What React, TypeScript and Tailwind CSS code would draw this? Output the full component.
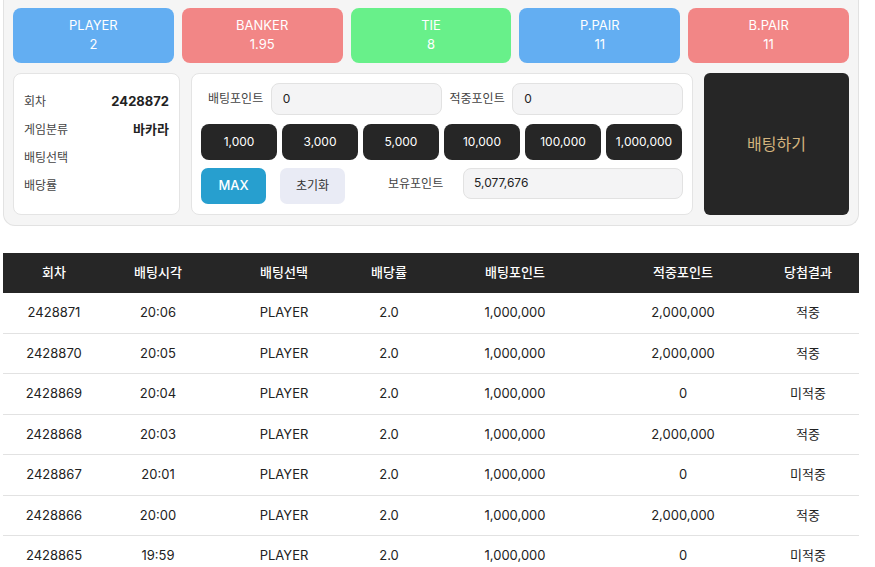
import React from 'react';

const font = { fontFamily: 'Inter, "Noto Sans CJK KR", sans-serif' };

const bets = [
  { name: 'PLAYER', rate: '2', color: 'bg-[#63aef2]' },
  { name: 'BANKER', rate: '1.95', color: 'bg-[#f28686]' },
  { name: 'TIE', rate: '8', color: 'bg-[#68f08a]' },
  { name: 'P.PAIR', rate: '11', color: 'bg-[#63aef2]' },
  { name: 'B.PAIR', rate: '11', color: 'bg-[#f28686]' },
];

const chips = ['1,000', '3,000', '5,000', '10,000', '100,000', '1,000,000'];

const history = [
  ['2428871', '20:06', '2,000,000', '적중'],
  ['2428870', '20:05', '2,000,000', '적중'],
  ['2428869', '20:04', '0', '미적중'],
  ['2428868', '20:03', '2,000,000', '적중'],
  ['2428867', '20:01', '0', '미적중'],
  ['2428866', '20:00', '2,000,000', '적중'],
  ['2428865', '19:59', '0', '미적중'],
];

const cols = 'grid grid-cols-[102px_106px_146px_64px_188px_148px_102px]';

export default function App() {
  return (
    <div className="w-[875px] h-[567px] overflow-hidden bg-white text-[#222]" style={font}>
      {/* bet panel */}
      <div className="ml-[3px] w-[856px] bg-[#f5f5f5] border border-t-0 border-[#e2e2e2] rounded-b-[12px] px-[9px] pt-[8px] pb-[10px]">
        <div className="flex gap-[8px]">
          {bets.map((b) => (
            <div
              key={b.name}
              className={`${b.color} flex-1 h-[55px] rounded-[8px] flex flex-col items-center justify-center pb-[2px] text-white text-[13px] leading-[19px]`}
            >
              <span>{b.name}</span>
              <span>{b.rate}</span>
            </div>
          ))}
        </div>

        <div className="flex mt-[10px] h-[142px]">
          <div className="w-[167px] bg-white border border-[#e4e4e4] rounded-[8px] px-[10px] pt-[14px] text-[12px] text-[#444]">
            <div className="flex justify-between items-center h-[28px]">
              <span>회차</span>
              <span className="font-bold text-[13px] text-[#222]">2428872</span>
            </div>
            <div className="flex justify-between items-center h-[28px]">
              <span>게임분류</span>
              <span className="font-bold text-[13px] text-[#222]">바카라</span>
            </div>
            <div className="flex items-center h-[28px]">배팅선택</div>
            <div className="flex items-center h-[28px]">배당률</div>
          </div>

          <div className="ml-[11px] w-[502px] bg-white border border-[#e4e4e4] rounded-[8px] px-[9px] pt-[9px]">
            <div className="flex items-center h-[32px] text-[12px] text-[#444]">
              <span className="ml-[7px] w-[63px]">배팅포인트</span>
              <div className="w-[171px] h-[32px] rounded-[8px] bg-[#f4f4f5] border border-[#e2e2e2] flex items-center px-[11px] text-[12px] text-[#222]">0</div>
              <span className="ml-[8px] w-[63px]">적중포인트</span>
              <div className="w-[171px] h-[32px] rounded-[8px] bg-[#f4f4f5] border border-[#e2e2e2] flex items-center px-[11px] text-[12px] text-[#222]">0</div>
            </div>

            <div className="flex gap-[5px] mt-[9px]">
              {chips.map((c) => (
                <button
                  key={c}
                  className="w-[76px] h-[36px] rounded-[8px] bg-[#262626] text-white text-[12px] flex items-center justify-center"
                >
                  {c}
                </button>
              ))}
            </div>

            <div className="flex items-center mt-[8px]">
              <button className="w-[65px] h-[36px] rounded-[7px] bg-[#279fcf] text-white text-[13px] font-medium">MAX</button>
              <button className="ml-[14px] w-[65px] h-[36px] rounded-[7px] bg-[#e9ebf5] text-[#333] text-[12px]">초기화</button>
              <span className="ml-[43px] w-[75px] text-[12px] text-[#444] -mt-[5px]">보유포인트</span>
              <div className="w-[220px] h-[31px] -mt-[6px] rounded-[8px] bg-[#f4f4f5] border border-[#e2e2e2] flex items-center px-[10px] text-[12px] text-[#222]">5,077,676</div>
            </div>
          </div>

          <button className="ml-[11px] w-[145px] h-[142px] rounded-[6px] bg-[#262626] text-[#d3b47e] text-[16px] flex items-center justify-center">
            배팅하기
          </button>
        </div>
      </div>

      {/* history table */}
      <div className="ml-[3px] w-[856px] mt-[27px]">
        <div className={`${cols} h-[40px] bg-[#262626] text-white text-[13px] font-medium items-center text-center`}>
          <span>회차</span>
          <span>배팅시각</span>
          <span>배팅선택</span>
          <span>배당률</span>
          <span>배팅포인트</span>
          <span>적중포인트</span>
          <span>당첨결과</span>
        </div>
        {history.map(([round, time, win, result]) => (
          <div
            key={round}
            className={`${cols} h-[40.5px] border-b border-[#e2e2e2] items-center text-center text-[13px] text-[#222]`}
          >
            <span>{round}</span>
            <span>{time}</span>
            <span>PLAYER</span>
            <span>2.0</span>
            <span>1,000,000</span>
            <span>{win}</span>
            <span>{result}</span>
          </div>
        ))}
      </div>
    </div>
  );
}
